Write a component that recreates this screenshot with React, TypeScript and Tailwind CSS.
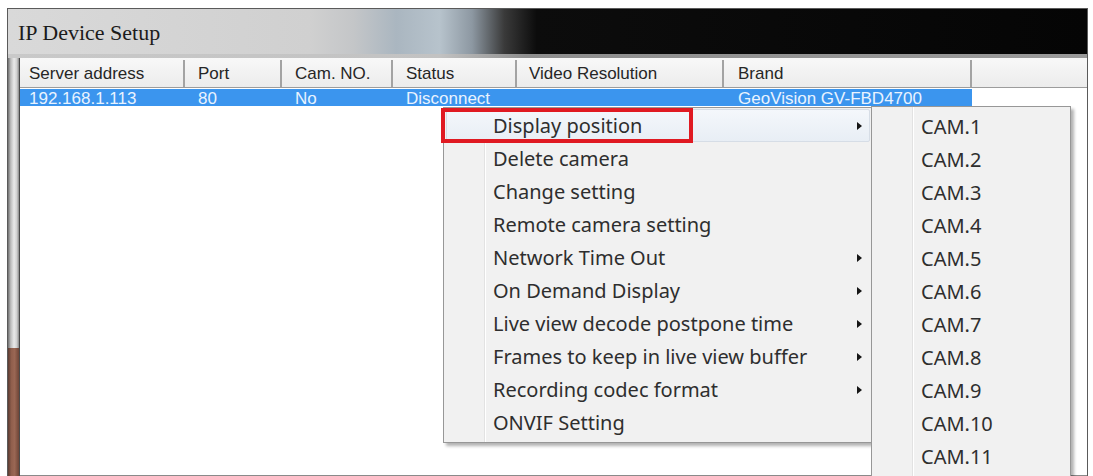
import React from "react";

const cols = [
  { label: "Server address", value: "192.168.1.113", w: "w-[165px]", pl: "pl-[9px]" },
  { label: "Port", value: "80", w: "w-[97px]", pl: "pl-[13px]" },
  { label: "Cam. NO.", value: "No", w: "w-[111px]", pl: "pl-[13px]" },
  { label: "Status", value: "Disconnect", w: "w-[124px]", pl: "pl-[13px]" },
  { label: "Video Resolution", value: "", w: "w-[207px]", pl: "pl-[12px]" },
  { label: "Brand", value: "GeoVision GV-FBD4700", w: "w-[248px]", pl: "pl-[14px]" },
];

const menuItems: { label: string; arrow: boolean }[] = [
  { label: "Display position", arrow: true },
  { label: "Delete camera", arrow: false },
  { label: "Change setting", arrow: false },
  { label: "Remote camera setting", arrow: false },
  { label: "Network Time Out", arrow: true },
  { label: "On Demand Display", arrow: true },
  { label: "Live view decode postpone time", arrow: true },
  { label: "Frames to keep in live view buffer", arrow: true },
  { label: "Recording codec format", arrow: true },
  { label: "ONVIF Setting", arrow: false },
];

const cams = Array.from({ length: 11 }, (_, i) => `CAM.${i + 1}`);

function Arrow() {
  return (
    <svg width="5" height="8" viewBox="0 0 5 8" className="block">
      <path d="M0 0 L5 4 L0 8 Z" fill="#151515" />
    </svg>
  );
}

export default function App() {
  return (
    <div className="relative w-[1093px] h-[476px] overflow-hidden bg-white pt-[8px] pl-[7px]">
      <div className="flex h-[468px] w-[1081px] flex-col border-l border-t border-r border-[#5a5a5a]">
        {/* Title bar */}
        <div className="flex h-[45px] items-center bg-[linear-gradient(to_right,#d9d9d9_0%,#d0d0d0_28%,#c4c6c8_32%,#aab6c0_36%,#b7c3cc_40%,#8d98a2_43%,#3a3a3a_46%,#0c0c0c_49%,#050505_100%)] pl-[10px]">
          <span className="text-[22px] leading-none text-[#1b1b1b] [font-family:'Liberation_Serif',serif] pt-[3px]">
            IP Device Setup
          </span>
        </div>
        <div className="h-[4px] bg-[linear-gradient(to_right,#c9c9c9_0%,#c2c2c2_40%,#8e8e8e_48%,#9a9a9a_100%)]" />
        {/* Body */}
        <div className="flex flex-1 min-h-0">
          {/* left frame strip */}
          <div className="flex w-[12px] flex-col border-r border-[#4a4a4a]">
            <div className="flex-1 bg-[linear-gradient(to_right,#6f6f6f_0%,#bdbdbd_25%,#eaeaea_55%,#d0d0d0_80%,#8a8a8a_100%)]" />
            <div className="h-[128px] bg-[linear-gradient(to_right,#5b3b31_0%,#8f5e4c_30%,#9a6754_60%,#6e4537_100%)]" />
          </div>
          {/* list */}
          <div className="flex flex-1 flex-col border-b border-[#8a8a8a] bg-white [font-family:'Liberation_Sans',Arial,sans-serif]">
            <div className="flex h-[30px] border-b border-[#9c9c9c] bg-[linear-gradient(to_bottom,#f8f8f8,#ececec)] pt-[2px]">
              {cols.map((c) => (
                <div
                  key={c.label}
                  className={`${c.w} ${c.pl} flex items-center border-r-2 border-[#a3a3a3] text-[17px] text-[#262626]`}
                >
                  {c.label}
                </div>
              ))}
              <div className="flex-1" />
            </div>
            <div className="mt-[1px] flex h-[17px] w-[952px] bg-[#3b95ee]">
              {cols.map((c) => (
                <div
                  key={c.label}
                  className={`${c.w} ${c.pl} flex items-center pt-[2px] text-[17px] leading-[17px] text-[#e9f3ff] pr-[2px]`}
                >
                  {c.value}
                </div>
              ))}
            </div>
          </div>
        </div>
      </div>

      {/* Context menu */}
      <div className="absolute left-[443px] top-[107px] h-[336px] w-[430px] border border-[#979797] bg-[#f1f1f1] py-[1px] shadow-[3px_3px_3px_rgba(0,0,0,0.3)] [font-family:'Noto_Sans',sans-serif]">
        <div className="absolute left-[40px] top-0 bottom-0 w-px bg-[#e2e2e2]" />
        <div className="absolute left-[41px] top-0 bottom-0 w-px bg-white" />
        {menuItems.map((m, i) => (
          <div
            key={m.label}
            className={`relative flex h-[33px] items-center pr-[10px] text-[20px] text-[#2e2e2e] ${
              i === 0
                ? "mx-[2px] rounded-[2px] border border-[#d6dde6] bg-[linear-gradient(to_bottom,#f4f7fb,#e8eef5)] pl-[46px]"
                : "pl-[49px]"
            }`}
          >
            <span className="flex-1 leading-none">{m.label}</span>
            {m.arrow && (
              <span className={`absolute top-1/2 -translate-y-1/2 ${i === 0 ? "right-[7px]" : "right-[10px]"}`}>
                <Arrow />
              </span>
            )}
          </div>
        ))}
      </div>

      {/* Red highlight box */}
      <div className="absolute left-[441px] top-[108px] h-[35px] w-[252px] border-4 border-[#e01a22]" />

      {/* Submenu */}
      <div className="absolute left-[871px] top-[106px] h-[390px] w-[200px] border border-[#979797] bg-[#f1f1f1] pt-[3px] shadow-[3px_3px_3px_rgba(0,0,0,0.3)] [font-family:'Noto_Sans',sans-serif]">
        <div className="absolute left-[40px] top-0 bottom-0 w-px bg-[#e2e2e2]" />
        <div className="absolute left-[41px] top-0 bottom-0 w-px bg-white" />
        {cams.map((c) => (
          <div key={c} className="flex h-[33px] items-center pl-[49px] text-[20px] text-[#2e2e2e]">
            <span className="leading-none">{c}</span>
          </div>
        ))}
      </div>
    </div>
  );
}
